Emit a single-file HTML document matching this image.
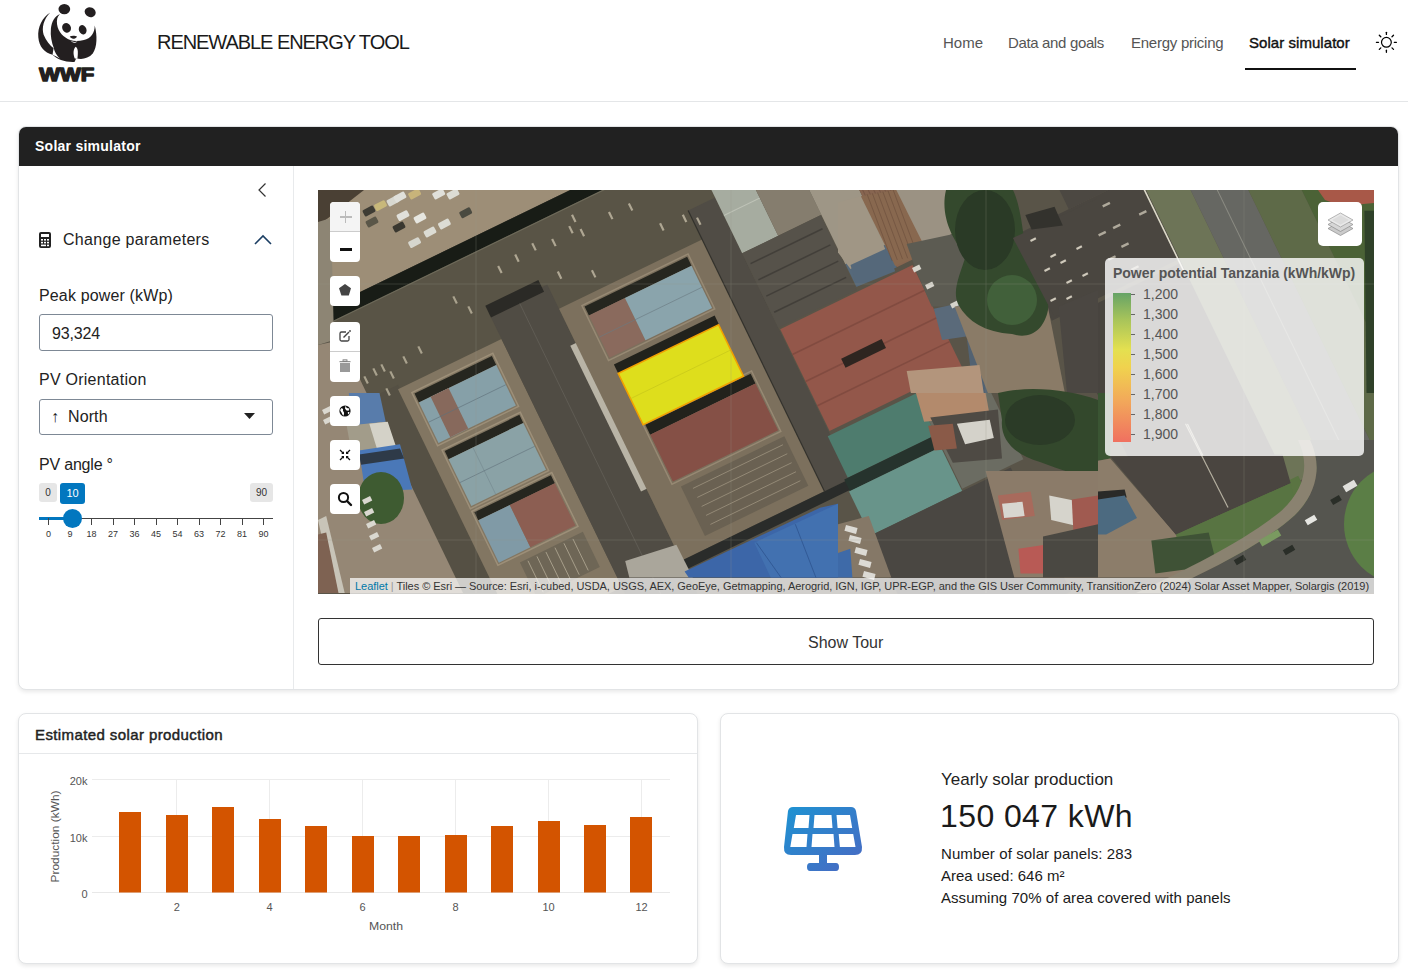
<!DOCTYPE html>
<html><head><meta charset="utf-8">
<style>
*{box-sizing:border-box;margin:0;padding:0}
html,body{width:1408px;height:975px;overflow:hidden;background:#fff;font-family:"Liberation Sans",sans-serif;color:#1d1d1d}
.abs{position:absolute;white-space:nowrap}
.nav{position:absolute;top:34px;font-size:15px;color:#555;white-space:nowrap;line-height:17px}
.card{position:absolute;border:1px solid #e2e4e6;border-radius:8px;background:#fff;box-shadow:0 2px 4px rgba(0,0,0,0.09)}
.lbl{position:absolute;left:39px;font-size:16px;color:#222;white-space:nowrap;line-height:18px}
.ctl{position:absolute;left:330px;width:30px;background:#fff;border-radius:4px}
.tk{position:absolute;top:518px;width:1px;height:7px;background:#444}
.tl{position:absolute;top:529px;font-size:9px;color:#333;width:20px;text-align:center;line-height:11px}
.ax{position:absolute;font-size:11px;color:#555;line-height:12px;white-space:nowrap}
.leg{position:absolute;left:1143px;font-size:14px;color:#555;line-height:16px}
.legt{position:absolute;left:1131px;width:4px;height:1px;background:#666}
</style></head><body>
<!-- header -->
<div style="position:absolute;left:0;top:0;width:1408px;height:102px;border-bottom:1px solid #e4e6e8;background:#fff"></div>
<svg class="abs" style="left:34px;top:2px" width="66" height="84" viewBox="0 0 766 975">
 <g fill="#231f20">
  <ellipse cx="352" cy="82" rx="68" ry="60"/>
  <ellipse cx="652" cy="118" rx="66" ry="56" transform="rotate(25 652 118)"/>
  <path d="M190 122 C95 180 40 290 50 410 C60 520 120 590 215 612 C270 665 360 700 470 695 L492 650 C540 672 630 660 682 598 C735 520 735 390 705 272 C705 360 660 425 580 440 C530 452 470 458 420 442 C345 412 280 350 268 262 C260 205 272 165 302 138 C240 160 205 230 196 310 C188 390 205 470 232 540 C185 505 140 450 112 380 C88 300 110 200 190 122 Z"/>
 </g>
 <g fill="#fff">
  <path d="M486 520 C455 540 450 610 475 660 L505 650 C510 600 515 545 486 520 Z"/><path d="M228 530 C240 580 265 625 300 655 C270 640 245 625 215 612 Z"/><path d="M420 445 C440 465 480 470 505 455 C480 480 445 480 420 445 Z"/>
 </g>
 <g fill="#231f20">
  <ellipse cx="378" cy="300" rx="50" ry="57" transform="rotate(-30 378 300)"/>
  <ellipse cx="565" cy="322" rx="44" ry="55" transform="rotate(-20 565 322)"/>
  <path d="M415 400 C440 388 480 390 500 402 C485 420 465 428 455 428 C440 425 425 415 415 400 Z"/>
  <text x="60" y="918" font-family="Liberation Sans" font-weight="bold" font-size="215" textLength="640" lengthAdjust="spacingAndGlyphs" stroke="#231f20" stroke-width="16" stroke-linejoin="round">WWF</text>
 </g>
</svg>
<div class="abs" style="left:157px;top:31px;font-size:20px;color:#1a1a1a;letter-spacing:-1.05px;line-height:23px">RENEWABLE ENERGY TOOL</div>
<div class="nav" style="left:943px">Home</div>
<div class="nav" style="left:1008px;letter-spacing:-0.35px">Data and goals</div>
<div class="nav" style="left:1131px;letter-spacing:-0.25px">Energy pricing</div>
<div class="nav" style="left:1249px;color:#111;-webkit-text-stroke:0.4px #111;letter-spacing:0.05px">Solar simulator</div>
<div class="abs" style="left:1245px;top:68px;width:111px;height:2px;background:#111"></div>
<svg class="abs" style="left:1374px;top:30px" width="25" height="25" viewBox="-12.4 -12.3 25 25">
 <circle cx="0" cy="0" r="4.9" fill="none" stroke="#000" stroke-width="1.2"/>
 <g stroke="#000" stroke-width="1.3" stroke-linecap="round">
  <line x1="0" y1="-7.9" x2="0" y2="-10"/><line x1="0" y1="7.9" x2="0" y2="10"/>
  <line x1="-7.9" y1="0" x2="-10" y2="0"/><line x1="7.9" y1="0" x2="10" y2="0"/>
  <line x1="5.6" y1="-5.6" x2="7.1" y2="-7.1"/><line x1="-5.6" y1="-5.6" x2="-7.1" y2="-7.1"/>
  <line x1="5.6" y1="5.6" x2="7.1" y2="7.1"/><line x1="-5.6" y1="5.6" x2="-7.1" y2="7.1"/>
 </g>
</svg>
<!-- card 1 -->
<div class="card" style="left:18px;top:126px;width:1381px;height:564px;overflow:hidden">
  <div class="abs" style="left:0;top:0;width:1379px;height:39px;background:#212121;color:#fff;font-weight:bold;font-size:14px;padding:11px 0 0 16px;letter-spacing:0.25px">Solar simulator</div>
  <div class="abs" style="left:274px;top:39px;width:1px;height:524px;background:#e8eaec"></div>
</div>
<!-- sidebar -->
<svg class="abs" style="left:256px;top:182px" width="12" height="16" viewBox="0 0 12 16"><path d="M9.5 1.5 L3 8 L9.5 14.5" fill="none" stroke="#333" stroke-width="1.2"/></svg>
<svg class="abs" style="left:38px;top:231px" width="14" height="18" viewBox="0 0 14 18">
 <rect x="1" y="1" width="12" height="16" rx="2" fill="#222"/>
 <rect x="3" y="3" width="8" height="3" fill="#fff"/>
 <g fill="#fff"><rect x="3" y="8" width="2" height="1.6"/><rect x="6" y="8" width="2" height="1.6"/><rect x="9" y="8" width="2" height="1.6"/>
 <rect x="3" y="10.8" width="2" height="1.6"/><rect x="6" y="10.8" width="2" height="1.6"/><rect x="9" y="10.8" width="2" height="1.6"/>
 <rect x="3" y="13.6" width="5" height="1.6"/><rect x="9" y="13.6" width="2" height="1.6"/></g>
</svg>
<div class="abs" style="left:63px;top:231px;font-size:16px;color:#222;letter-spacing:0.3px;line-height:18px">Change parameters</div>
<svg class="abs" style="left:253px;top:232px" width="20" height="14" viewBox="0 0 20 14"><path d="M2 12 L10 4 L18 12" fill="none" stroke="#1b3e63" stroke-width="1.6"/></svg>
<div class="lbl" style="top:286.5px;letter-spacing:0.15px">Peak power (kWp)</div>
<div class="abs" style="left:39px;top:314px;width:234px;height:37px;border:1px solid #7d8895;border-radius:3px"></div>
<div class="abs" style="left:52px;top:325px;font-size:16px;color:#222;line-height:18px;letter-spacing:-0.15px">93,324</div>
<div class="lbl" style="top:371px;letter-spacing:0.25px">PV Orientation</div>
<div class="abs" style="left:39px;top:399px;width:234px;height:36px;border:1px solid #7d8895;border-radius:3px"></div>
<div class="abs" style="left:51px;top:408px;font-size:16px;color:#222;line-height:18px">↑</div><div class="abs" style="left:68px;top:408px;font-size:16px;color:#222;line-height:18px;letter-spacing:0.1px">North</div>
<svg class="abs" style="left:243px;top:412px" width="13" height="8" viewBox="0 0 13 8"><path d="M1 1 L12 1 L6.5 7 Z" fill="#222"/></svg>
<div class="lbl" style="top:455.5px;letter-spacing:-0.2px">PV angle °</div>
<div class="abs" style="left:39px;top:483px;width:18px;height:19px;background:#e6e6e6;border-radius:3px;font-size:10px;color:#333;text-align:center;line-height:19px">0</div>
<div class="abs" style="left:60px;top:483px;width:25px;height:21px;background:#0277bf;border-radius:3px;font-size:11px;color:#fff;text-align:center;line-height:21px">10</div>
<div class="abs" style="left:250px;top:483px;width:23px;height:19px;background:#e6e6e6;border-radius:3px;font-size:10px;color:#333;text-align:center;line-height:19px">90</div>
<div class="abs" style="left:39px;top:517.5px;width:234px;height:1.5px;background:#444"></div>
<div class="abs" style="left:39px;top:516.5px;width:34px;height:3.5px;background:#0277bf"></div>
<div class="tk" style="left:48.0px"></div>
<div class="tl" style="left:38.5px">0</div>
<div class="tk" style="left:69.5px"></div>
<div class="tl" style="left:60.0px">9</div>
<div class="tk" style="left:91.0px"></div>
<div class="tl" style="left:81.5px">18</div>
<div class="tk" style="left:112.5px"></div>
<div class="tl" style="left:103.0px">27</div>
<div class="tk" style="left:134.0px"></div>
<div class="tl" style="left:124.5px">36</div>
<div class="tk" style="left:155.6px"></div>
<div class="tl" style="left:146.1px">45</div>
<div class="tk" style="left:177.1px"></div>
<div class="tl" style="left:167.6px">54</div>
<div class="tk" style="left:198.6px"></div>
<div class="tl" style="left:189.1px">63</div>
<div class="tk" style="left:220.1px"></div>
<div class="tl" style="left:210.6px">72</div>
<div class="tk" style="left:241.6px"></div>
<div class="tl" style="left:232.1px">81</div>
<div class="tk" style="left:263.1px"></div>
<div class="tl" style="left:253.6px">90</div>
<svg class="abs" style="left:318px;top:190px" width="1056" height="404" viewBox="318 190 1056 404">
<rect x="318" y="190" width="1056" height="404" fill="#595448"/>
<g transform="matrix(0.8996 -0.4368 0.4368 0.8996 0 0)"><rect x="-100" y="200" width="860" height="220" fill="#9d8e77" />
<rect x="158" y="420" width="402" height="285" fill="#595446" />
<rect x="150" y="420" width="415" height="14" fill="#181c16" />
<line x1="160" y1="434.5" x2="560" y2="434.5" stroke="#7d7a68" stroke-width="1.2" opacity="0.6"/>
<rect x="158" y="520" width="32" height="680" fill="#555044" />
<rect x="188" y="524" width="115" height="276" fill="#827662" />
<rect x="201" y="535" width="86" height="10" fill="#26261f" />
<rect x="201" y="545" width="86" height="45" fill="#86a0a8" />
<rect x="214" y="545" width="20" height="45" fill="#87695c" />
<line x1="201" y1="567" x2="287" y2="567" stroke="#60707a" stroke-width="0.8" opacity="0.7"/>
<rect x="203" y="600" width="83" height="9" fill="#26261f" />
<rect x="203" y="609" width="83" height="52" fill="#8aa2a6" />
<line x1="203" y1="635" x2="286" y2="635" stroke="#63737d" stroke-width="0.8" opacity="0.7"/>
<line x1="230" y1="609" x2="230" y2="661" stroke="#63737d" stroke-width="0.6" opacity="0.5"/>
<rect x="203" y="668" width="85" height="9" fill="#26261f" />
<rect x="203" y="677" width="35" height="47" fill="#809aa6" />
<rect x="238" y="677" width="50" height="47" fill="#8c5e52" />
<rect x="222" y="733" width="70" height="39" fill="#6e6656" />
<rect x="199" y="533" width="90" height="59" fill="none" stroke="#a89a82" stroke-width="1.5" opacity="0.7"/>
<rect x="201" y="598" width="87" height="65" fill="none" stroke="#a89a82" stroke-width="1.5" opacity="0.7"/>
<rect x="201" y="666" width="89" height="60" fill="none" stroke="#a89a82" stroke-width="1.5" opacity="0.7"/>
<line x1="230" y1="735" x2="230" y2="770" stroke="#c9c0aa" stroke-width="0.8" opacity="0.7"/>
<line x1="240" y1="735" x2="240" y2="770" stroke="#c9c0aa" stroke-width="0.8" opacity="0.7"/>
<line x1="250" y1="735" x2="250" y2="770" stroke="#c9c0aa" stroke-width="0.8" opacity="0.7"/>
<line x1="260" y1="735" x2="260" y2="770" stroke="#c9c0aa" stroke-width="0.8" opacity="0.7"/>
<line x1="270" y1="735" x2="270" y2="770" stroke="#c9c0aa" stroke-width="0.8" opacity="0.7"/>
<line x1="280" y1="735" x2="280" y2="770" stroke="#c9c0aa" stroke-width="0.8" opacity="0.7"/>
<rect x="303" y="495" width="65" height="705" fill="#504c44" />
<rect x="303" y="487" width="59" height="13" fill="#2b2a26" />
<line x1="335" y1="500" x2="335" y2="1200" stroke="#6d6a62" stroke-width="0.8" opacity="0.6"/>
<rect x="362" y="560" width="8" height="162" fill="#b9b4a6" />
<rect x="368" y="522" width="159" height="280" fill="#7c705d" />
<rect x="392" y="531" width="114" height="10" fill="#26261f" />
<rect x="392" y="541" width="40" height="47" fill="#8a6a5d" />
<rect x="432" y="541" width="74" height="47" fill="#8aa4ac" />
<line x1="392" y1="565" x2="506" y2="565" stroke="#6b7a82" stroke-width="0.8" opacity="0.7"/>
<rect x="393" y="596" width="112" height="10" fill="#22221c" />
<rect x="395" y="664" width="117" height="11" fill="#22221c" />
<rect x="395" y="675" width="117" height="52" fill="#855046" />
<rect x="400" y="735" width="115" height="55" fill="#6a6152" />
<rect x="390" y="529" width="118" height="61" fill="none" stroke="#a89a82" stroke-width="1.5" opacity="0.6"/>
<rect x="393" y="662" width="121" height="67" fill="none" stroke="#a89a82" stroke-width="1.5" opacity="0.6"/>
<line x1="410" y1="742" x2="510" y2="742" stroke="#b8ad96" stroke-width="0.8" opacity="0.6"/>
<line x1="410" y1="752" x2="510" y2="752" stroke="#b8ad96" stroke-width="0.8" opacity="0.6"/>
<line x1="410" y1="762" x2="510" y2="762" stroke="#b8ad96" stroke-width="0.8" opacity="0.6"/>
<line x1="410" y1="772" x2="510" y2="772" stroke="#b8ad96" stroke-width="0.8" opacity="0.6"/>
<line x1="410" y1="782" x2="510" y2="782" stroke="#b8ad96" stroke-width="0.8" opacity="0.6"/>
<rect x="393" y="606" width="111.5" height="57" fill="#dede1c" stroke="#f2a000" stroke-width="1.6"/>
<line x1="393" y1="634" x2="504.5" y2="634" stroke="#c8c81a" stroke-width="0.8" opacity="0.8"/>
<rect x="527" y="490" width="30" height="312" fill="#504c45" />
<line x1="527" y1="490" x2="527" y2="802" stroke="#2a2a26" stroke-width="1.2" opacity="0.8"/>
<rect x="368" y="802" width="332" height="10" fill="#2a2c2a" />
<rect x="557" y="460" width="40" height="92" fill="#a6aca0" />
<line x1="557" y1="510" x2="597" y2="510" stroke="#c8ccc0" stroke-width="1" opacity="0.7"/>
<rect x="597" y="460" width="48" height="92" fill="#857d6e" />
<rect x="557" y="552" width="87" height="83" fill="#56524a" />
<line x1="560" y1="565" x2="640" y2="565" stroke="#3a3733" stroke-width="1.5" opacity="0.7"/>
<line x1="560" y1="583" x2="640" y2="583" stroke="#3a3733" stroke-width="1.5" opacity="0.7"/>
<line x1="560" y1="601" x2="640" y2="601" stroke="#3a3733" stroke-width="1.5" opacity="0.7"/>
<line x1="560" y1="619" x2="640" y2="619" stroke="#3a3733" stroke-width="1.5" opacity="0.7"/>
<rect x="645" y="480" width="45" height="127" fill="#9e9686" />
<rect x="645" y="607" width="45" height="25" fill="#56697a" />
<rect x="690" y="480" width="50" height="152" fill="#876550" />
<line x1="693" y1="485" x2="693" y2="630" stroke="#6e5040" stroke-width="1" opacity="0.6"/>
<line x1="698" y1="485" x2="698" y2="630" stroke="#6e5040" stroke-width="1" opacity="0.6"/>
<line x1="703" y1="485" x2="703" y2="630" stroke="#6e5040" stroke-width="1" opacity="0.6"/>
<line x1="708" y1="485" x2="708" y2="630" stroke="#6e5040" stroke-width="1" opacity="0.6"/>
<line x1="713" y1="485" x2="713" y2="630" stroke="#6e5040" stroke-width="1" opacity="0.6"/>
<line x1="718" y1="485" x2="718" y2="630" stroke="#6e5040" stroke-width="1" opacity="0.6"/>
<line x1="723" y1="485" x2="723" y2="630" stroke="#6e5040" stroke-width="1" opacity="0.6"/>
<line x1="728" y1="485" x2="728" y2="630" stroke="#6e5040" stroke-width="1" opacity="0.6"/>
<line x1="733" y1="485" x2="733" y2="630" stroke="#6e5040" stroke-width="1" opacity="0.6"/>
<rect x="558" y="637" width="147" height="113" fill="#93574a" />
<line x1="558" y1="665" x2="705" y2="665" stroke="#7a463c" stroke-width="1.5" opacity="0.7"/>
<line x1="558" y1="695" x2="705" y2="695" stroke="#7a463c" stroke-width="1.5" opacity="0.7"/>
<line x1="558" y1="722" x2="705" y2="722" stroke="#7a463c" stroke-width="1.5" opacity="0.7"/>
<rect x="600" y="690" width="45" height="10" fill="#2e2520" />
<rect x="554" y="754" width="98" height="46" fill="#4e7c6e" />
<rect x="550" y="800" width="101" height="13" fill="#26332d" />
<rect x="549" y="813" width="102" height="49" fill="#68948a" />
<rect x="548" y="862" width="157" height="138" fill="#4a4742" />
<rect x="652" y="760" width="68" height="100" fill="#6b6c62" />
<rect x="806" y="655" width="142" height="93" fill="#4a4640" />
<rect x="870" y="540" width="78" height="115" fill="#4c4842" />
<rect x="815" y="752" width="133" height="243" fill="#48443f" />
<line x1="883" y1="900" x2="883" y2="993" stroke="#cfcab8" stroke-width="1.2" opacity="0.8"/>
<rect x="948" y="500" width="40" height="500" fill="#6d7457" />
<rect x="988" y="500" width="52" height="500" fill="#666762" />
<rect x="1040" y="500" width="48" height="500" fill="#5e6a48" />
<rect x="1088" y="500" width="162" height="500" fill="#4b6236" />
<line x1="1012" y1="500" x2="1012" y2="1000" stroke="#9a9a90" stroke-width="1" opacity="0.7"/>
<line x1="946.5" y1="500" x2="946.5" y2="760" stroke="#dcd9c8" stroke-width="1.6" opacity="1"/>
<rect x="815" y="995" width="145" height="45" fill="#5a7442" /></g>
<polygon points="318.0,190.0 364.0,190.0 318.0,226.0" fill="#4a4034" />
<polygon points="318.0,222.0 331.0,218.0 334.0,340.0 318.0,345.0" fill="#8d8574" />
<rect x="363" y="207.5" width="12" height="7" rx="1.5" fill="#3e3c34" transform="rotate(-28 369 211)"/>
<rect x="374.5" y="202.1" width="12" height="7" rx="1.5" fill="#c8b87a" transform="rotate(-28 380.5 205.6)"/>
<rect x="387" y="197.5" width="12" height="7" rx="1.5" fill="#d8d8d0" transform="rotate(-28 393 201)"/>
<rect x="394" y="193.5" width="12" height="7" rx="1.5" fill="#e0e0da" transform="rotate(-28 400 197)"/>
<rect x="408.6" y="190.5" width="12" height="7" rx="1.5" fill="#c8b47a" transform="rotate(-28 414.6 194)"/>
<rect x="397" y="212.1" width="12" height="7" rx="1.5" fill="#e0e0da" transform="rotate(-28 403 215.6)"/>
<rect x="414" y="214.5" width="12" height="7" rx="1.5" fill="#e6e6e0" transform="rotate(-28 420 218)"/>
<rect x="393" y="223.5" width="12" height="7" rx="1.5" fill="#3a3830" transform="rotate(-28 399 227)"/>
<rect x="424" y="228.5" width="12" height="7" rx="1.5" fill="#dcdcd4" transform="rotate(-28 430 232)"/>
<rect x="408.6" y="239.1" width="12" height="7" rx="1.5" fill="#d6d6ce" transform="rotate(-28 414.6 242.6)"/>
<rect x="438.4" y="220.5" width="12" height="7" rx="1.5" fill="#dcdcd4" transform="rotate(-28 444.4 224)"/>
<rect x="459.7" y="209.2" width="12" height="7" rx="1.5" fill="#4a4a40" transform="rotate(-28 465.7 212.7)"/>
<rect x="432.7" y="190.5" width="12" height="7" rx="1.5" fill="#e0e0da" transform="rotate(-28 438.7 194)"/>
<rect x="447" y="190.5" width="12" height="7" rx="1.5" fill="#dcdcd4" transform="rotate(-28 453 194)"/>
<rect x="366" y="218.5" width="12" height="7" rx="1.5" fill="#5a5648" transform="rotate(-28 372 222)"/>
<rect x="572.6818181818182" y="214.4090909090909" width="2.2" height="8" fill="#c4bca6" opacity="0.8" transform="rotate(-26 573.6818181818182 218.4090909090909)"/>
<rect x="569.8409090909091" y="225.77272727272728" width="2.2" height="8" fill="#c4bca6" opacity="0.8" transform="rotate(-26 570.8409090909091 229.77272727272728)"/>
<rect x="581.2045454545455" y="228.61363636363637" width="2.2" height="8" fill="#c4bca6" opacity="0.8" transform="rotate(-26 582.2045454545455 232.61363636363637)"/>
<rect x="552.7954545454545" y="238.5568181818182" width="2.2" height="8" fill="#c4bca6" opacity="0.8" transform="rotate(-26 553.7954545454545 242.5568181818182)"/>
<rect x="609.6136363636364" y="211.5681818181818" width="2.2" height="8" fill="#c4bca6" opacity="0.8" transform="rotate(-26 610.6136363636364 215.5681818181818)"/>
<rect x="498.8181818181818" y="265.54545454545456" width="2.2" height="8" fill="#c4bca6" opacity="0.8" transform="rotate(-26 499.8181818181818 269.54545454545456)"/>
<rect x="558.4772727272727" y="271.22727272727275" width="2.2" height="8" fill="#c4bca6" opacity="0.8" transform="rotate(-26 559.4772727272727 275.22727272727275)"/>
<rect x="592.5681818181818" y="269.8068181818182" width="2.2" height="8" fill="#c4bca6" opacity="0.8" transform="rotate(-26 593.5681818181818 273.8068181818182)"/>
<rect x="683.4772727272727" y="214.4090909090909" width="2.2" height="8" fill="#c4bca6" opacity="0.8" transform="rotate(-26 684.4772727272727 218.4090909090909)"/>
<rect x="697.6818181818182" y="217.25" width="2.2" height="8" fill="#c4bca6" opacity="0.8" transform="rotate(-26 698.6818181818182 221.25)"/>
<rect x="515.8636363636364" y="254.1818181818182" width="2.2" height="8" fill="#c4bca6" opacity="0.8" transform="rotate(-26 516.8636363636364 258.1818181818182)"/>
<rect x="629.5" y="203.04545454545456" width="2.2" height="8" fill="#c4bca6" opacity="0.8" transform="rotate(-26 630.5 207.04545454545456)"/>
<rect x="660.75" y="222.9318181818182" width="2.2" height="8" fill="#c4bca6" opacity="0.8" transform="rotate(-26 661.75 226.9318181818182)"/>
<rect x="532.9090909090909" y="242.8181818181818" width="2.2" height="8" fill="#c4bca6" opacity="0.8" transform="rotate(-26 533.9090909090909 246.8181818181818)"/>
<rect x="374" y="368" width="2.2" height="8" fill="#c4bca6" opacity="0.75" transform="rotate(-26 375 372)"/>
<rect x="382" y="364" width="2.2" height="8" fill="#c4bca6" opacity="0.75" transform="rotate(-26 383 368)"/>
<rect x="391" y="371" width="2.2" height="8" fill="#c4bca6" opacity="0.75" transform="rotate(-26 392 375)"/>
<rect x="365" y="376" width="2.2" height="8" fill="#c4bca6" opacity="0.75" transform="rotate(-26 366 380)"/>
<rect x="387" y="388" width="2.2" height="8" fill="#c4bca6" opacity="0.75" transform="rotate(-26 388 392)"/>
<rect x="404" y="356" width="2.2" height="8" fill="#c4bca6" opacity="0.75" transform="rotate(-26 405 360)"/>
<rect x="419" y="346" width="2.2" height="8" fill="#c4bca6" opacity="0.75" transform="rotate(-26 420 350)"/>
<rect x="454" y="296" width="2.2" height="8" fill="#c4bca6" opacity="0.75" transform="rotate(-26 455 300)"/>
<rect x="469" y="306" width="2.2" height="8" fill="#c4bca6" opacity="0.75" transform="rotate(-26 470 310)"/>
<rect x="351" y="396" width="2.2" height="8" fill="#c4bca6" opacity="0.75" transform="rotate(-26 352 400)"/>
<rect x="359" y="388" width="2.2" height="8" fill="#c4bca6" opacity="0.75" transform="rotate(-26 360 392)"/>
<rect x="1102.3" y="203.4" width="8" height="2.4" fill="#c8c2b2" opacity="0.8" transform="rotate(-26 1106.3 204.6)"/>
<rect x="1112.7" y="225.20000000000002" width="8" height="2.4" fill="#c8c2b2" opacity="0.8" transform="rotate(-26 1116.7 226.4)"/>
<rect x="1098.2" y="232.5" width="8" height="2.4" fill="#c8c2b2" opacity="0.8" transform="rotate(-26 1102.2 233.7)"/>
<rect x="1121" y="244.0" width="8" height="2.4" fill="#c8c2b2" opacity="0.8" transform="rotate(-26 1125 245.2)"/>
<rect x="1138.8" y="211.70000000000002" width="8" height="2.4" fill="#c8c2b2" opacity="0.8" transform="rotate(-26 1142.8 212.9)"/>
<rect x="1108" y="256.8" width="8" height="2.4" fill="#c8c2b2" opacity="0.8" transform="rotate(-26 1112 258)"/>
<rect x="1131" y="266.8" width="8" height="2.4" fill="#c8c2b2" opacity="0.8" transform="rotate(-26 1135 268)"/>
<polygon points="318.0,345.0 341.0,340.0 463.0,593.0 318.0,593.0" fill="#958775" />
<polygon points="348.8,393.0 379.5,393.0 385.7,421.7 352.9,425.8" fill="#587cab" />
<polygon points="346.7,425.8 385.7,421.7 395.9,452.5 352.9,460.7" fill="#a29c8a" />
<polygon points="369.3,423.8 387.7,421.7 395.9,446.3 377.5,450.4" fill="#d4d2c8" />
<polygon points="359.0,450.4 400.0,444.3 412.3,489.4 365.2,491.4" fill="#4a78b8" />
<polygon points="359.0,454.5 400.0,448.4 404.1,458.6 361.1,464.8" fill="#2e3a48" />
<ellipse cx="381" cy="498" rx="23" ry="26" fill="#3e5b31" />
<polygon points="318.0,520.1 326.2,516.0 344.7,592.9 334.4,592.9" fill="#c8c4b8" />
<polygon points="318.0,534.5 326.2,532.4 338.5,592.9 318.0,592.9" fill="#7e6252" />
<rect x="362" y="500" width="9" height="5" fill="#dad8d0" transform="rotate(-26 362 500)"/>
<rect x="364" y="512" width="9" height="5" fill="#dad8d0" transform="rotate(-26 364 512)"/>
<rect x="366" y="524" width="9" height="5" fill="#dad8d0" transform="rotate(-26 366 524)"/>
<rect x="369" y="536" width="9" height="5" fill="#dad8d0" transform="rotate(-26 369 536)"/>
<rect x="372" y="548" width="9" height="5" fill="#dad8d0" transform="rotate(-26 372 548)"/>
<rect x="322" y="410" width="9" height="5" fill="#dad8d0" transform="rotate(-26 322 410)"/>
<rect x="323" y="420" width="9" height="5" fill="#dad8d0" transform="rotate(-26 323 420)"/>
<polygon points="625.2,561.1 676.4,544.7 692.8,577.5 629.3,577.5" fill="#aaa69b" />
<polygon points="684.6,571.4 820.0,507.8 838.0,503.7 838.0,577.5 688.7,577.5" fill="#3c66a8" />
<polygon points="754.3,542.7 838.0,503.7 838.0,577.5 770.7,577.5" fill="#4271b0" />
<g stroke="#2f5590" stroke-width="1" opacity="0.8"><line x1="756.4" y1="542.7" x2="781.0" y2="577.5"/><line x1="795.3" y1="524.2" x2="815.9" y2="577.5"/></g>
<polygon points="838.0,552.9 850.3,548.8 852.4,577.5 838.0,577.5" fill="#3e6aa8" />
<polygon points="838.0,202.5 860.9,196.2 885.9,250.4 850.5,269.1 838.0,252.4" fill="#a09685" />
<polygon points="850.5,264.9 886.9,248.3 895.2,271.2 856.7,286.8" fill="#55687a" />
<polygon points="860.9,196.2 894.2,190.0 900.4,190.0 926.5,252.4 895.2,266.0" fill="#88684f" />
<g stroke="#6b4e3c" stroke-width="1" opacity="0.6"><line x1="867.1" y1="194.2" x2="892.1" y2="260.8"/><line x1="872.3" y1="193.3" x2="897.3" y2="259.9"/><line x1="877.6" y1="192.5" x2="902.5" y2="259.1"/><line x1="882.8" y1="191.7" x2="907.7" y2="258.3"/><line x1="888.0" y1="190.8" x2="912.9" y2="257.4"/><line x1="893.2" y1="190.0" x2="918.1" y2="256.6"/></g>
<polygon points="896.3,190.0 946.2,190.0 954.6,231.6 927.5,252.4" fill="#9b9283" />
<polygon points="906.7,244.1 954.6,233.7 973.3,269.1 967.1,306.6 931.7,306.6 917.1,273.3" fill="#5c5b52" />
<polygon points="933.8,308.7 962.9,302.4 971.2,335.7 942.1,339.9" fill="#5a6a7a" />
<polygon points="967.1,339.9 979.5,339.9 987.9,393.0 973.3,393.0" fill="#526272" />
<rect x="912" y="268" width="8" height="5" fill="#d6d4cc" transform="rotate(-26 912 268)"/>
<rect x="925" y="285" width="8" height="5" fill="#d6d4cc" transform="rotate(-26 925 285)"/>
<rect x="950" y="304" width="8" height="5" fill="#d6d4cc" transform="rotate(-26 950 304)"/>
<rect x="960" y="318" width="8" height="5" fill="#d6d4cc" transform="rotate(-26 960 318)"/>
<rect x="965" y="330" width="8" height="5" fill="#d6d4cc" transform="rotate(-26 965 330)"/>
<rect x="972" y="345" width="8" height="5" fill="#d6d4cc" transform="rotate(-26 972 345)"/>
<rect x="995" y="320" width="8" height="5" fill="#d6d4cc" transform="rotate(-26 995 320)"/>
<polygon points="954.6,306.6 1046.2,298.2 1064.9,393.0 987.9,393.0" fill="#8a7b67" />
<polygon points="906.7,371.1 979.5,364.9 983.7,393.0 910.9,393.0" fill="#b3957c" />
<path d="M946,190 L1013,190 C1020,205 1022,225 1025,245 C1040,262 1050,285 1048,310 C1044,330 1030,340 1012,334 C985,332 968,322 958,304 C952,290 960,275 966,255 C952,240 940,215 946,190 Z" fill="#34492d" />
<ellipse cx="985" cy="230" rx="30" ry="40" fill="#2a3a26" />
<ellipse cx="1012" cy="300" rx="25" ry="25" fill="#41603a" />
<polygon points="1012.9,237.9 1058.6,217.1 1098.0,198.3 1098.0,298.2 1054.5,317.0" fill="#4a4640" />
<polygon points="1025.3,215.0 1054.5,206.7 1062.8,225.4 1031.6,229.6" fill="#33322d" />
<polygon points="1058.6,306.6 1098.0,289.9 1098.0,393.0 1067.0,393.0" fill="#4b4742" />
<rect x="1030" y="240" width="6" height="2.2" fill="#cfc9bb" transform="rotate(-26 1030 240)"/>
<rect x="1050" y="256" width="6" height="2.2" fill="#cfc9bb" transform="rotate(-26 1050 256)"/>
<rect x="1044" y="270" width="6" height="2.2" fill="#cfc9bb" transform="rotate(-26 1044 270)"/>
<rect x="1060" y="262" width="6" height="2.2" fill="#cfc9bb" transform="rotate(-26 1060 262)"/>
<rect x="1076" y="248" width="6" height="2.2" fill="#cfc9bb" transform="rotate(-26 1076 248)"/>
<rect x="1066" y="282" width="6" height="2.2" fill="#cfc9bb" transform="rotate(-26 1066 282)"/>
<rect x="1082" y="275" width="6" height="2.2" fill="#cfc9bb" transform="rotate(-26 1082 275)"/>
<rect x="1050" y="300" width="6" height="2.2" fill="#cfc9bb" transform="rotate(-26 1050 300)"/>
<rect x="1066" y="298" width="6" height="2.2" fill="#cfc9bb" transform="rotate(-26 1066 298)"/>
<polygon points="915.9,393.0 985.6,393.0 989.7,415.6 924.1,421.7" fill="#b38a6c" />
<polygon points="930.3,417.6 997.9,409.4 1002.0,458.6 952.8,462.7" fill="#4e4a44" />
<polygon points="956.9,423.8 989.7,419.7 993.8,438.1 965.1,444.3" fill="#d4d2ca" />
<polygon points="928.2,425.8 952.8,423.8 956.9,448.4 934.4,450.4" fill="#8a5a48" />
<path d="M998,393 C1030,385 1070,390 1098,400 L1098,480 C1080,475 1060,470 1040,462 C1015,455 1000,440 1002,420 Z" fill="#33482c" />
<ellipse cx="1040" cy="420" rx="35" ry="25" fill="#2b3b27" />
<polygon points="985.6,470.9 1098.0,470.9 1098.0,577.5 1014.3,577.5" fill="#8b7b69" />
<polygon points="997.9,495.5 1030.7,491.4 1034.8,516.0 1002.0,520.1" fill="#a86a5c" />
<polygon points="1002.0,503.7 1022.5,501.7 1024.6,516.0 1004.1,518.1" fill="#d8d6d0" />
<polygon points="1049.2,495.5 1080.0,501.7 1077.9,526.3 1051.2,520.1" fill="#d6d4cc" />
<polygon points="1071.8,499.6 1098.0,495.5 1098.0,540.6 1073.8,540.6" fill="#a05a50" />
<polygon points="1018.4,548.8 1045.1,544.7 1047.1,573.4 1020.5,573.4" fill="#b85a55" />
<polygon points="1043.0,536.5 1098.0,524.2 1098.0,577.5 1043.0,577.5" fill="#4a4842" />
<polygon points="838.0,524.2 868.8,516.0 891.3,577.5 838.0,577.5" fill="#857867" />
<polygon points="838.0,552.9 850.3,548.8 852.4,577.5 838.0,577.5" fill="#3e6aa8" />
<rect x="846" y="525" width="12" height="6" fill="#dcdad4" transform="rotate(15 846 525)"/>
<rect x="850" y="535" width="12" height="6" fill="#dcdad4" transform="rotate(15 850 535)"/>
<rect x="856" y="547" width="12" height="6" fill="#dcdad4" transform="rotate(15 856 547)"/>
<rect x="860" y="559" width="12" height="6" fill="#dcdad4" transform="rotate(15 860 559)"/>
<rect x="864" y="571" width="12" height="6" fill="#dcdad4" transform="rotate(15 864 571)"/>
<polygon points="1098.0,393.0 1110.3,393.0 1110.3,458.6 1098.0,460.7" fill="#3a5533" />
<polygon points="1098.0,460.7 1110.3,458.6 1175.9,534.5 1186.2,577.5 1098.0,577.5" fill="#8c7d6a" />
<polygon points="1110.3,456.6 1282.5,454.5 1290.7,483.2 1175.9,534.5" fill="#4a4540" />
<polygon points="1098.0,491.4 1124.7,489.4 1126.7,497.6 1098.0,501.7" fill="#2a2a28" />
<polygon points="1098.0,499.6 1124.7,495.5 1137.0,518.1 1106.2,534.5 1098.0,534.5" fill="#4c6a80" />
<polygon points="1175.9,534.5 1290.7,483.2 1303.0,536.5 1200.5,557.0" fill="#587442" />
<polygon points="1151.3,540.6 1208.7,532.4 1216.9,565.2 1155.4,573.4" fill="#3f5236" />
<path d="M1374,440 L1374,593 L1160,593 C1210,570 1262,545 1295,515 C1318,492 1322,465 1310,440 Z" fill="#55554f" />
<path d="M1310,440 C1322,465 1318,492 1295,515 C1262,545 1210,570 1160,593 L1136,593 C1190,568 1245,540 1280,512 C1305,490 1310,465 1298,440 Z" fill="#8a8270" />
<ellipse cx="1402" cy="524" rx="58" ry="60" fill="#5b7e46" />
<rect x="1305.5" y="517.0" width="11" height="6" fill="#e6e6e2" transform="rotate(-30 1311 520)"/>
<rect x="1343.5" y="482.5" width="13" height="7" fill="#e0e0dc" transform="rotate(-30 1350 486)"/>
<rect x="1331.0" y="497.0" width="10" height="6" fill="#2a2e28" transform="rotate(-30 1336 500)"/>
<rect x="1283.5" y="547.0" width="11" height="6" fill="#2a2e28" transform="rotate(-30 1289 550)"/>
<rect x="1234.5" y="557.0" width="11" height="6" fill="#2a2e28" transform="rotate(-30 1240 560)"/>
<rect x="1259.0" y="534.5" width="22" height="7" fill="#7a9a60" transform="rotate(-30 1270 538)"/>
<line x1="1185.5" y1="423.8" x2="1228" y2="507.6" stroke="#cfcab8" stroke-width="1.2" opacity="0.8"/>
<polygon points="1318.0,190.0 1374.0,190.0 1374.0,203.0 1342.0,206.0 1325.0,200.0" fill="#a85848" />
<polygon points="1364.4,210.8 1374.0,210.8 1374.0,393.0 1366.5,393.0" fill="#2f4129" />
<g stroke="#9a9a8a" stroke-width="0.7" opacity="0.35"><line x1="318" y1="284" x2="1374" y2="284"/><line x1="318" y1="540" x2="1374" y2="540"/><line x1="476" y1="190" x2="476" y2="593"/><line x1="731" y1="190" x2="731" y2="593"/><line x1="986" y1="190" x2="986" y2="593"/><line x1="1244" y1="190" x2="1244" y2="593"/></g>
</svg>
<div class="abs" style="left:63px;top:509px;width:19px;height:19px;border-radius:50%;background:#0277bf"></div>
<!-- map controls -->
<div class="ctl" style="top:202px;height:60px;overflow:hidden">
 <div style="position:absolute;left:0;top:0;width:30px;height:29px;background:#f4f4f4"></div>
 <div style="position:absolute;left:0;top:29px;width:30px;height:1px;background:#ccc"></div>
 <div style="position:absolute;left:9.5px;top:14px;width:12px;height:1.5px;background:#bbb"></div>
 <div style="position:absolute;left:14.75px;top:8.5px;width:1.5px;height:12px;background:#bbb"></div>
 <div style="position:absolute;left:9.5px;top:46px;width:12px;height:2.5px;background:#111"></div>
</div>
<div class="ctl" style="top:276px;height:30px">
 <svg style="position:absolute;left:8px;top:7px" width="14" height="14" viewBox="0 0 14 14"><path d="M7 1 L13 5.2 L10.8 12.5 L3.4 12.5 L1 5.2 Z" fill="#444"/></svg>
</div>
<div class="ctl" style="top:322px;height:60px">
 <div style="position:absolute;left:0;top:29px;width:30px;height:1px;background:#ccc"></div>
 <svg style="position:absolute;left:8px;top:7px" width="14" height="14" viewBox="0 0 14 14"><path d="M8 3 H3.5 A1.5 1.5 0 0 0 2 4.5 V10.5 A1.5 1.5 0 0 0 3.5 12 H9.5 A1.5 1.5 0 0 0 11 10.5 V7" fill="none" stroke="#444" stroke-width="1.3"/><path d="M5.5 8.5 L11 3" stroke="#444" stroke-width="1.4"/><circle cx="12" cy="2" r="0.9" fill="#444"/></svg>
 <svg style="position:absolute;left:8px;top:36px" width="14" height="16" viewBox="0 0 14 16"><rect x="2" y="5" width="10" height="9" fill="#999"/><rect x="1.5" y="3.2" width="11" height="1" fill="#777"/><rect x="5" y="1.8" width="4" height="1.4" fill="none" stroke="#777" stroke-width="0.8"/></svg>
</div>
<div class="ctl" style="top:396px;height:30px">
 <svg style="position:absolute;left:9px;top:9px" width="12" height="12" viewBox="0 0 12 12"><circle cx="6" cy="6" r="5.6" fill="#111"/><path d="M2.2 3.2 C3.5 3 4.5 4 4 5.2 C3.5 6 4.8 6.5 5 7.5 C5.2 8.8 4.8 10 4.5 10.8 C3.5 9.8 2.8 8.6 2.5 7.5 C2 6.8 1.2 5.8 1.2 5 Z M6.5 1 C7.5 1.8 7.2 2.6 8 3 C9 3.4 9.8 3.2 10.6 3.8 C10 4.5 9.6 5 9.8 5.8 L7.6 5.4 C6.8 5 6.6 4.2 6 3.6 Z M8.8 7 C9.8 6.8 10.6 7.3 10.6 7.8 C10.2 8.6 9.6 9.2 9 9.4 Z" fill="#fff"/></svg>
</div>
<div class="ctl" style="top:440px;height:30px">
 <svg style="position:absolute;left:9px;top:9px" width="12" height="12" viewBox="0 0 12 12"><g stroke="#111" stroke-width="1.3"><path d="M1 1 L4.5 4.5 M11 1 L7.5 4.5 M1 11 L4.5 7.5 M11 11 L7.5 7.5"/></g><g fill="#111"><path d="M5 5 L2.2 5 L5 2.2Z M7 5 L9.8 5 L7 2.2Z M5 7 L2.2 7 L5 9.8Z M7 7 L9.8 7 L7 9.8Z"/></g></svg>
</div>
<div class="ctl" style="top:484px;height:30px">
 <svg style="position:absolute;left:6px;top:6px" width="18" height="18" viewBox="0 0 18 18"><circle cx="7.5" cy="7.5" r="4.6" fill="none" stroke="#111" stroke-width="2"/><path d="M11 11 L15 15" stroke="#111" stroke-width="2.4" stroke-linecap="round"/></svg>
</div>
<!-- layers -->
<div class="abs" style="left:1318px;top:202px;width:44px;height:44px;background:#fff;border-radius:5px">
 <svg style="position:absolute;left:9px;top:8px" width="27" height="27" viewBox="0 0 27 27">
  <path d="M1 18.5 L13.5 11.5 L26 18.5 L13.5 25.5 Z" fill="#cbcbcb" stroke="#8a8a8a" stroke-width="0.7"/>
  <path d="M1 14.5 L13.5 7.5 L26 14.5 L13.5 21.5 Z" fill="#d6d6d6" stroke="#8a8a8a" stroke-width="0.7"/>
  <path d="M1 10 L13.5 3 L26 10 L13.5 17 Z" fill="#e9e9e9" stroke="#999" stroke-width="0.7"/>
  <path d="M5 10 L13.5 5.3 L22 10 L13.5 14.7 Z" fill="#dcdcdc"/>
 </svg>
</div>
<!-- legend -->
<div class="abs" style="left:1105px;top:258px;width:259px;height:198px;background:rgba(255,255,255,0.8);border-radius:5px"></div>
<div class="abs" style="left:1113px;top:265px;font-size:14px;font-weight:bold;color:#555;line-height:16px;letter-spacing:-0.03px">Power potential Tanzania (kWh/kWp)</div>
<div class="abs" style="left:1113px;top:293px;width:18px;height:149px;background:linear-gradient(#66a366 0%,#a8c45a 18%,#e4e050 38%,#f0d24e 50%,#f2a95a 72%,#f07060 100%)"></div>
<div class="legt" style="top:293.5px"></div><div class="leg" style="top:285.5px">1,200</div>
<div class="legt" style="top:313.5px"></div><div class="leg" style="top:305.5px">1,300</div>
<div class="legt" style="top:333.5px"></div><div class="leg" style="top:325.5px">1,400</div>
<div class="legt" style="top:353.5px"></div><div class="leg" style="top:345.5px">1,500</div>
<div class="legt" style="top:373.5px"></div><div class="leg" style="top:365.5px">1,600</div>
<div class="legt" style="top:393.5px"></div><div class="leg" style="top:385.5px">1,700</div>
<div class="legt" style="top:413.5px"></div><div class="leg" style="top:405.5px">1,800</div>
<div class="legt" style="top:433.5px"></div><div class="leg" style="top:425.5px">1,900</div>
<!-- attribution -->
<div class="abs" style="left:350px;top:578px;width:1024px;height:16px;background:rgba(255,255,255,0.72)"></div>
<div class="abs" style="left:355px;top:580px;font-size:11px;color:#333;line-height:13px;letter-spacing:-0.035px"><span style="color:#0078a8">Leaflet</span> <span style="color:#999">|</span> Tiles © Esri — Source: Esri, i-cubed, USDA, USGS, AEX, GeoEye, Getmapping, Aerogrid, IGN, IGP, UPR-EGP, and the GIS User Community, TransitionZero (2024) Solar Asset Mapper, Solargis (2019)</div>
<!-- show tour -->
<div class="abs" style="left:318px;top:618px;width:1056px;height:47px;border:1px solid #333;border-radius:3px"></div>
<div class="abs" style="left:808px;top:633.5px;font-size:16px;color:#333;line-height:18px">Show Tour</div>
<!-- card 2 -->
<div class="card" style="left:18px;top:713px;width:680px;height:251px">
  <div class="abs" style="left:0;top:0;width:678px;height:40px;border-bottom:1px solid #e6e8ea"></div>
</div>
<div class="abs" style="left:35px;top:726px;font-size:15px;color:#222;line-height:17px;-webkit-text-stroke:0.45px #222;letter-spacing:0.4px">Estimated solar production</div>
<!-- chart -->
<svg class="abs" style="left:0;top:0" width="700" height="975">
 <g stroke="#ececec" stroke-width="1">
  <line x1="92" y1="779.5" x2="670" y2="779.5"/><line x1="92" y1="836.5" x2="670" y2="836.5"/>
  <line x1="176.5" y1="779" x2="176.5" y2="892"/><line x1="269.5" y1="779" x2="269.5" y2="892"/><line x1="362.5" y1="779" x2="362.5" y2="892"/>
  <line x1="455.5" y1="779" x2="455.5" y2="892"/><line x1="548.5" y1="779" x2="548.5" y2="892"/><line x1="641.5" y1="779" x2="641.5" y2="892"/>
 </g>
 <line x1="92" y1="892.5" x2="670" y2="892.5" stroke="#e8e8e8" stroke-width="1"/>
 <g fill="#d35400">
  <rect x="119" y="812" width="22" height="80.5"/>
  <rect x="166" y="815" width="22" height="77.5"/>
  <rect x="212" y="807" width="22" height="85.5"/>
  <rect x="259" y="819" width="22" height="73.5"/>
  <rect x="305" y="826" width="22" height="66.5"/>
  <rect x="352" y="836" width="22" height="56.5"/>
  <rect x="398" y="836" width="22" height="56.5"/>
  <rect x="445" y="835" width="22" height="57.5"/>
  <rect x="491" y="826" width="22" height="66.5"/>
  <rect x="538" y="821" width="22" height="71.5"/>
  <rect x="584" y="825" width="22" height="67.5"/>
  <rect x="630" y="817" width="22" height="75.5"/>
 </g>
 <g font-family="Liberation Sans" font-size="11" fill="#555" text-anchor="end">
  <text x="87.5" y="785">20k</text><text x="87.5" y="841.5">10k</text><text x="87.5" y="897.5">0</text>
 </g>
 <g font-family="Liberation Sans" font-size="11" fill="#555" text-anchor="middle">
  <text x="176.7" y="911">2</text><text x="269.5" y="911">4</text><text x="362.5" y="911">6</text>
  <text x="455.5" y="911">8</text><text x="548.5" y="911">10</text><text x="641.5" y="911">12</text>
  <text x="386" y="930" textLength="34" lengthAdjust="spacingAndGlyphs">Month</text>
  <text transform="translate(59 836.5) rotate(-90)" x="0" y="0" textLength="92" lengthAdjust="spacingAndGlyphs">Production (kWh)</text>
 </g>
</svg>
<!-- card 3 -->
<div class="card" style="left:720px;top:713px;width:679px;height:251px"></div>
<svg class="abs" style="left:780px;top:803px" width="86" height="72" viewBox="780 803 86 72">
 <defs><linearGradient id="sg" x1="0" y1="0" x2="1" y2="1"><stop offset="0" stop-color="#1d93d2"/><stop offset="1" stop-color="#4a68c2"/></linearGradient></defs>
 <path fill="url(#sg)" fill-rule="evenodd" d="M793 807 L851 807 Q855 807 856 811 L862 847 Q862.5 855 855 855 L827 855 L827 863 L836 863 Q839 863 839 867 Q839 871 836 871 L810 871 Q807 871 807 867 Q807 863 810 863 L819 863 L819 855 L791 855 Q783.5 855 784 847 L788 811 Q789 807 793 807 Z
 M796 815 L809.5 815 L808.5 828 L793.8 828 Z M814.5 815 L831.5 815 L832.5 828 L813.5 828 Z M836.5 815 L850 815 L852.2 828 L837.6 828 Z
 M792.5 834 L807.5 834 L806.5 847 L790.3 847 Z M812.5 834 L833.5 834 L834.5 847 L811.5 847 Z M838.7 834 L853.2 834 L855.5 847 L839.9 847 Z"/>
</svg>
<div class="abs" style="left:941px;top:770px;font-size:17px;color:#222;line-height:19px">Yearly solar production</div>
<div class="abs" style="left:940px;top:798px;font-size:32px;color:#1a1a1a;line-height:36px;letter-spacing:0.4px">150 047 kWh</div>
<div class="abs" style="left:941px;top:845px;font-size:15px;color:#1a1a1a;line-height:17px;letter-spacing:0.1px">Number of solar panels: 283</div>
<div class="abs" style="left:941px;top:867px;font-size:15px;color:#1a1a1a;line-height:17px">Area used: 646 m²</div>
<div class="abs" style="left:941px;top:889px;font-size:15px;color:#1a1a1a;line-height:17px;letter-spacing:0.05px">Assuming 70% of area covered with panels</div>
</body></html>
